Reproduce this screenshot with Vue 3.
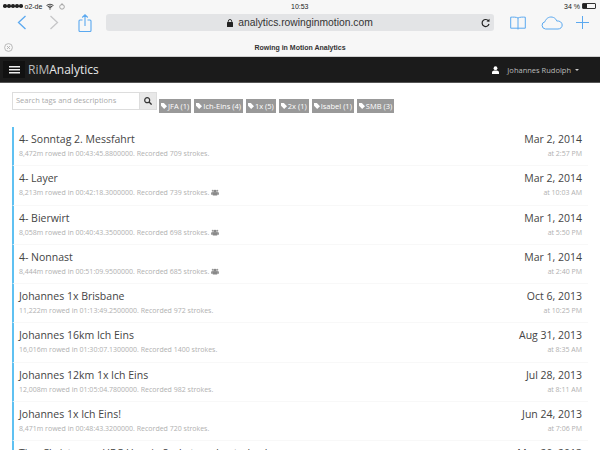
<template>
  <div class="page">
    <div class="status">
      <div class="status-left">
        <span class="dots"><i v-for="n in 5" :key="n"></i></span>
        <span>o2-de</span>
        <svg class="wifi" width="8" height="7" viewBox="0 0 14 11"><path d="M1 4a8.500 8.500 0 0 1 12 0M3 6.200a5.600 5.600 0 0 1 8 0M5 8.200a2.800 2.800 0 0 1 4 0" fill="none" stroke="#444" stroke-width="1.800"/><circle cx="7" cy="10" r="1.200" fill="#444"/></svg>
        <svg width="6" height="7" viewBox="0 0 9 10"><circle cx="4.500" cy="5.500" r="3.500" fill="none" stroke="#999" stroke-width="1.300"/><path d="M4.500 0v3" stroke="#999" stroke-width="1.300"/></svg>
      </div>
      <span class="clock">10:53</span>
      <div class="status-right">
        <span>34 %</span>
        <span class="battery"><b></b></span>
      </div>
    </div>

    <div class="toolbar">
      <svg class="tool back" width="10" height="15" viewBox="0 0 10 15"><path d="M8.500 1 1.500 7.500l7 6.500" fill="none" stroke="#5ba9f0" stroke-width="1.300"/></svg>
      <svg class="tool forward" width="10" height="15" viewBox="0 0 10 15"><path d="M1.500 1l7 6.500-7 6.500" fill="none" stroke="#c6c6c8" stroke-width="1.300"/></svg>
      <svg class="tool share" width="14" height="18" viewBox="0 0 14 18"><path d="M4.500 6H2a1 1 0 0 0-1 1v9.500a1 1 0 0 0 1 1h10a1 1 0 0 0 1-1V7a1 1 0 0 0-1-1H9.500M7 12V1M4.200 3.500 7 .8l2.800 2.700" fill="none" stroke="#5ba9f0" stroke-width="1.100"/></svg>
      <div class="address">
        <svg width="6" height="8" viewBox="0 0 6 8"><rect y="3" width="6" height="5" rx="0.600" fill="#222"/><path d="M1.300 3.500V2.200a1.700 1.700 0 0 1 3.400 0v1.300" fill="none" stroke="#222" stroke-width="0.900"/></svg>
        <span>analytics.rowinginmotion.com</span>
        <svg class="reload" width="9" height="10" viewBox="0 0 9 10"><path d="M7.500 3A3.500 3.500 0 1 0 8 6" fill="none" stroke="#222" stroke-width="1.200"/><path d="M5.500 3.500 8.500 3.800V.8z" fill="#222"/></svg>
      </div>
      <svg class="tool book" width="16" height="14" viewBox="0 0 16 14"><path d="M8 2v11.500M8 2C6.500 1 3 1 .7 1.200v11h7.300M8 2c1.500-1 5-1 7.300-.8v11H8" fill="none" stroke="#5ba9f0" stroke-width="1"/></svg>
      <svg class="tool cloud" width="22" height="14" viewBox="0 0 22 14"><path d="M5 13H4.500a3.700 3.700 0 0 1-.5-7.300C5 2 9 0 12.500 1.500c2 .8 3 2.500 3.200 3.500 3-.5 5.500 1.500 5.500 4 0 2.300-1.800 4-4.200 4z" fill="none" stroke="#5ba9f0" stroke-width="1"/></svg>
      <svg class="tool plus" width="13" height="13" viewBox="0 0 13 13"><path d="M6.500 0v13M0 6.500h13" stroke="#5ba9f0" stroke-width="1"/></svg>
    </div>

    <div class="tabbar">
      <svg class="tab-close" width="9" height="9" viewBox="0 0 9 9"><circle cx="4.500" cy="4.500" r="3.900" fill="none" stroke="#aaa" stroke-width="0.800"/><path d="M3 3l3 3M6 3 3 6" stroke="#aaa" stroke-width="0.800"/></svg>
      <span>Rowing in Motion Analytics</span>
    </div>

    <header class="navbar">
      <button class="burger"><i></i><i></i><i></i></button>
      <span class="brand">RiM<b>Analytics</b></span>
      <div class="user">
        <svg width="7" height="8" viewBox="0 0 7 8"><circle cx="3.500" cy="2.200" r="1.900" fill="#fff"/><path d="M0 8V6.300C0 5 1.200 4.500 3.500 4.500S7 5 7 6.300V8z" fill="#fff"/></svg>
        <span>Johannes Rudolph</span>
        <i class="caret"></i>
      </div>
    </header>

    <div class="filters">
      <div class="search">
        <span class="search-input">Search tags and descriptions</span>
        <span class="search-btn">
          <svg width="8" height="8" viewBox="0 0 8 8"><circle cx="3.200" cy="3.200" r="2.500" fill="none" stroke="#333" stroke-width="1.200"/><path d="M5 5l2.600 2.600" stroke="#333" stroke-width="1.300"/></svg>
        </span>
      </div>
      <div class="tags">
        <span v-for="t in tags" :key="t" class="tag">
          <svg width="6" height="6" viewBox="0 0 6 6"><path d="M0 0h2.800L6 3.200 3.200 6 0 2.800z" fill="#fff"/></svg>{{ t }}
        </span>
      </div>
    </div>

    <ul class="list">
      <li v-for="r in rows" :key="r.title" class="row">
        <div>
          <div class="title">{{ r.title }}</div>
          <div class="sub">
            {{ r.sub }}
            <svg v-if="r.team" class="team" width="8" height="7" viewBox="0 0 9 7"><circle cx="2" cy="1.500" r="1.200" fill="#999"/><circle cx="7" cy="1.500" r="1.200" fill="#999"/><circle cx="4.500" cy="2" r="1.500" fill="#888"/><path d="M0 6V4q0-1 2-1h5q2 0 2 1v2z" fill="#999"/><path d="M2 7V5q0-1.500 2.500-1.500T7 5v2z" fill="#888"/></svg>
          </div>
        </div>
        <div class="when">
          <div class="date">{{ r.date }}</div>
          <div class="time">{{ r.time }}</div>
        </div>
      </li>
    </ul>
  </div>
</template>

<script setup>
const tags = ['JFA (1)', 'Ich-Eins (4)', '1x (5)', '2x (1)', 'Isabel (1)', 'SMB (3)']

const rows = [
  { title: '4- Sonntag 2. Messfahrt', sub: '8,472m rowed in 00:43:45.8800000. Recorded 709 strokes.', date: 'Mar 2, 2014', time: 'at 2:57 PM' },
  { title: '4- Layer', sub: '8,213m rowed in 00:42:18.3000000. Recorded 739 strokes.', team: true, date: 'Mar 2, 2014', time: 'at 10:03 AM' },
  { title: '4- Bierwirt', sub: '8,058m rowed in 00:40:43.3500000. Recorded 698 strokes.', team: true, date: 'Mar 1, 2014', time: 'at 5:50 PM' },
  { title: '4- Nonnast', sub: '8,444m rowed in 00:51:09.9500000. Recorded 685 strokes.', team: true, date: 'Mar 1, 2014', time: 'at 2:40 PM' },
  { title: 'Johannes 1x Brisbane', sub: '11,222m rowed in 01:13:49.2500000. Recorded 972 strokes.', date: 'Oct 6, 2013', time: 'at 10:25 PM' },
  { title: 'Johannes 16km Ich Eins', sub: '16,016m rowed in 01:30:07.1300000. Recorded 1400 strokes.', date: 'Aug 31, 2013', time: 'at 8:35 AM' },
  { title: 'Johannes 12km 1x Ich Eins', sub: '12,008m rowed in 01:05:04.7800000. Recorded 982 strokes.', date: 'Jul 28, 2013', time: 'at 8:11 AM' },
  { title: 'Johannes 1x Ich Eins!', sub: '8,471m rowed in 00:48:43.3200000. Recorded 720 strokes.', date: 'Jun 24, 2013', time: 'at 7:06 PM' },
  { title: 'Tina Christmann HRC Honzig Saskatoon Lauterbach', sub: '', date: 'May 20, 2013', time: '' }
]
</script>

<style>
html, body {
  background: #fff;
  overflow: hidden;
}
</style>

<style scoped>
.page {
  width: 600px;
  height: 450px;
  overflow: hidden;
  font-family: "Open Sans", sans-serif;
  color: #333;
}

.status {
  height: 12px;
  background: #f7f7f7;
  display: flex;
  align-items: center;
  justify-content: space-between;
  padding: 0 4px 0 3px;
  font-family: "Liberation Sans", sans-serif;
  font-size: 7px;
  color: #222;
  position: relative;
}
.status-left, .status-right {
  display: flex;
  align-items: center;
  gap: 2px;
}
.wifi { margin-left: 2px; margin-right: 3px; }
.dots {
  display: flex;
  gap: 0.5px;
}
.dots i {
  width: 3.5px;
  height: 3.5px;
  border-radius: 50%;
  background: #222;
}
.clock {
  position: absolute;
  left: 291px;
}
.battery {
  width: 14px;
  height: 6px;
  border: 1px solid #333;
  border-radius: 1px;
  box-sizing: border-box;
}
.battery b {
  display: block;
  width: 4px;
  height: 100%;
  background: #222;
}

.toolbar {
  height: 26px;
  box-sizing: border-box;
  padding: 0 0 5px 17px;
  background: #f7f7f7;
  display: flex;
  align-items: center;
}
.tool { flex: none; }
.forward { margin-left: 22px; }
.share { margin-left: 19px; }
.book { margin-left: 16px; }
.cloud { margin-left: 15px; }
.plus { margin-left: 13px; }
.address {
  width: 388px;
  height: 17px;
  margin-left: 14px;
  background: #e3e4e6;
  border-radius: 3px;
  display: flex;
  align-items: center;
  justify-content: center;
  gap: 5px;
  font-family: "Liberation Sans", sans-serif;
  font-size: 10.3px;
  color: #333;
  position: relative;
}
.reload {
  position: absolute;
  right: 4px;
}

.tabbar {
  height: 18px;
  background: #f7f7f7;
  border-bottom: 1px solid #d0d0d0;
  display: flex;
  align-items: center;
  justify-content: center;
  font-family: "Liberation Sans", sans-serif;
  font-size: 7px;
  font-weight: bold;
  color: #333;
  position: relative;
}
.tab-close {
  position: absolute;
  left: 4px;
  top: 5px;
}

.navbar {
  height: 25px;
  background: #1b1b1b;
  border-bottom: 1px solid #555;
  display: flex;
  align-items: center;
  padding: 0 3px;
  color: #ccc;
}
.burger {
  width: 22px;
  height: 17px;
  background: #111;
  border: 0;
  padding: 0;
  display: flex;
  flex-direction: column;
  align-items: center;
  justify-content: center;
  gap: 2px;
}
.burger i {
  width: 11px;
  height: 1px;
  background: #eee;
  box-shadow: 0 0.5px 0 #eee;
}
.brand {
  font-size: 12px;
  margin-left: 3px;
  color: #bbb;
}
.brand b {
  font-weight: 400;
  color: #e8e8e8;
}
.user {
  margin-left: auto;
  margin-right: 18px;
  display: flex;
  align-items: center;
  font-size: 7.5px;
  color: #bbb;
}
.user svg { margin-right: 8px; }
.caret {
  margin-left: 4px;
  border-left: 2.5px solid transparent;
  border-right: 2.5px solid transparent;
  border-top: 2.5px solid #ccc;
}

.filters {
  display: flex;
  align-items: flex-start;
  padding: 9px 12px 0;
  height: 35px;
}
.search {
  display: flex;
  height: 18px;
}
.search-input {
  width: 128px;
  box-sizing: border-box;
  border: 1px solid #ddd;
  padding-left: 3px;
  font-size: 7.5px;
  line-height: 15px;
  color: #aaa;
}
.search-btn {
  width: 17px;
  background: #e8e8e8;
  border: 1px solid #ddd;
  border-left: 0;
  box-sizing: border-box;
  display: flex;
  align-items: center;
  justify-content: center;
}
.tags {
  display: flex;
  gap: 3px;
  margin-left: 2px;
  margin-top: 7px;
}
.tag {
  height: 14px;
  background: #999;
  color: #fff;
  font-size: 7.5px;
  padding: 0 2px;
  display: flex;
  align-items: center;
  gap: 1px;
}

.list {
  list-style: none;
  margin: 0 12px;
  padding: 0;
}
.row {
  height: 39.3px;
  box-sizing: border-box;
  border-left: 2px solid #5fc1f2;
  border-bottom: 1px solid #f8f8f8;
  padding: 4px 6px 0 5px;
  display: flex;
  justify-content: space-between;
}
.title {
  font-size: 10.5px;
  line-height: 17px;
  color: #444;
}
.sub {
  font-size: 7px;
  line-height: 11px;
  color: #b0b0b0;
}
.team {
  vertical-align: -1px;
}
.when { text-align: right; }
.date {
  font-size: 10.5px;
  line-height: 17px;
  color: #444;
}
.time {
  font-size: 7px;
  line-height: 11px;
  color: #b0b0b0;
}
</style>
